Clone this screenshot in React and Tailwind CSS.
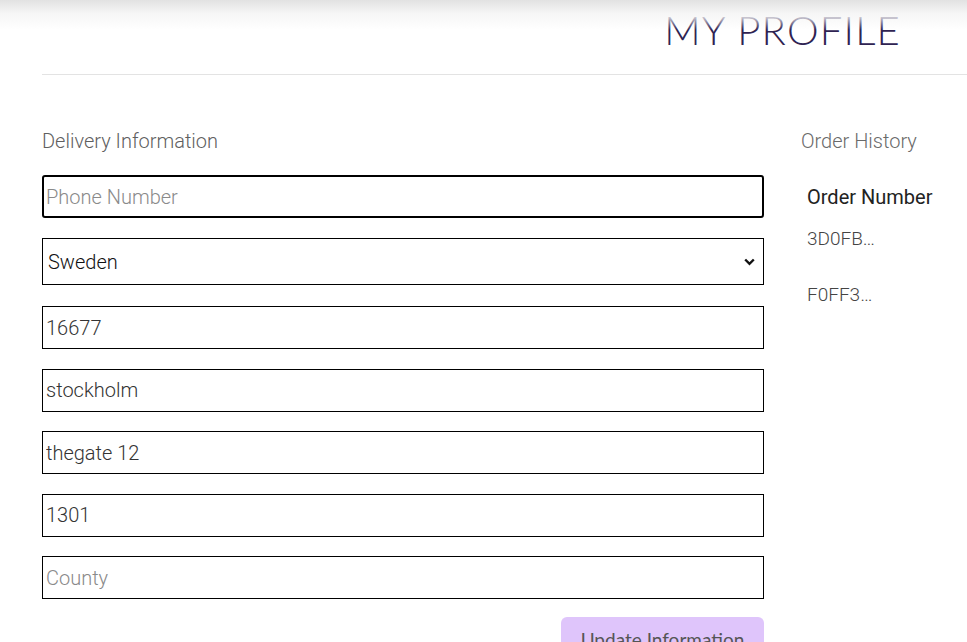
export default function App() {
  const fields = [
    { v: "16677" },
    { v: "stockholm" },
    { v: "thegate 12" },
    { v: "1301" },
    { v: "", p: "County" },
  ];
  return (
    <div className="w-[967px] h-[642px] overflow-hidden bg-white relative" style={{ fontFamily: "Roboto, 'Liberation Sans', sans-serif" }}>
      <div className="absolute left-0 right-0 top-0 h-[30px] bg-[linear-gradient(to_bottom,#e2e2e2,#f6f6f6_45%,rgba(255,255,255,0))] pointer-events-none" />
      <div className="ml-[42px] h-[75px] border-b border-[#e3e3e3] flex justify-end items-start pr-[66px]">
        <h1 className="mt-[8px] text-[40px] leading-[44px] font-light tracking-[1.2px] text-[#2f2352]" style={{ fontFamily: "Lato, 'Open Sans', sans-serif" }}>
          MY PROFILE
        </h1>
      </div>
      <div className="flex pl-[42px] pt-[52px]">
        <div className="w-[722px] flex flex-col">
          <h2 className="text-[20px] leading-[28px] font-light text-[#5f5f5f]">Delivery Information</h2>
          <input
            placeholder="Phone Number"
            className="mt-[20px] h-[43px] w-full border-2 border-black rounded-[3px] px-[2px] text-[20px] font-light text-[#333] placeholder:text-[#8a8a8a] outline-none"
          />
          <div className="mt-[20px] h-[47px] w-full border border-black relative flex items-center">
            <span className="pl-[5px] text-[20px] font-light text-[#111]">Sweden</span>
            <svg className="absolute right-[8px] top-[19px]" width="11" height="8" viewBox="0 0 11 8">
              <path d="M1.2 1.5 L5.5 5.8 L9.8 1.5" fill="none" stroke="#111" strokeWidth="2.4" />
            </svg>
          </div>
          <div className="flex flex-col gap-[19.5px] mt-[21px]">
            {fields.map((f, i) => (
              <input
                key={i}
                defaultValue={f.v}
                placeholder={f.p}
                className="h-[43px] w-full border border-black px-[3px] text-[20px] font-light text-[#333] placeholder:text-[#8a8a8a] outline-none"
              />
            ))}
          </div>
          <div className="flex justify-end mt-[18px]">
            <button
              className="w-[203px] h-[44px] rounded-[6px] bg-[#dfc5fb] text-[19px] leading-[22px] text-[#555] pt-[12px] flex justify-center items-start"
              style={{ fontFamily: "Lato, 'Open Sans', sans-serif" }}
            >
              Update Information
            </button>
          </div>
        </div>
        <div className="ml-[37px] flex flex-col">
          <h2 className="text-[20px] leading-[28px] font-light text-[#6a6a6a]">Order History</h2>
          <div className="pl-[6px] mt-[28px] flex flex-col">
            <div className="text-[20px] leading-[28px] font-normal text-[#222]">Order Number</div>
            <div className="mt-[14px] text-[19px] leading-[28px] font-light text-[#444]">3D0FB…</div>
            <div className="mt-[28px] text-[19px] leading-[28px] font-light text-[#444]">F0FF3…</div>
          </div>
        </div>
      </div>
    </div>
  );
}
